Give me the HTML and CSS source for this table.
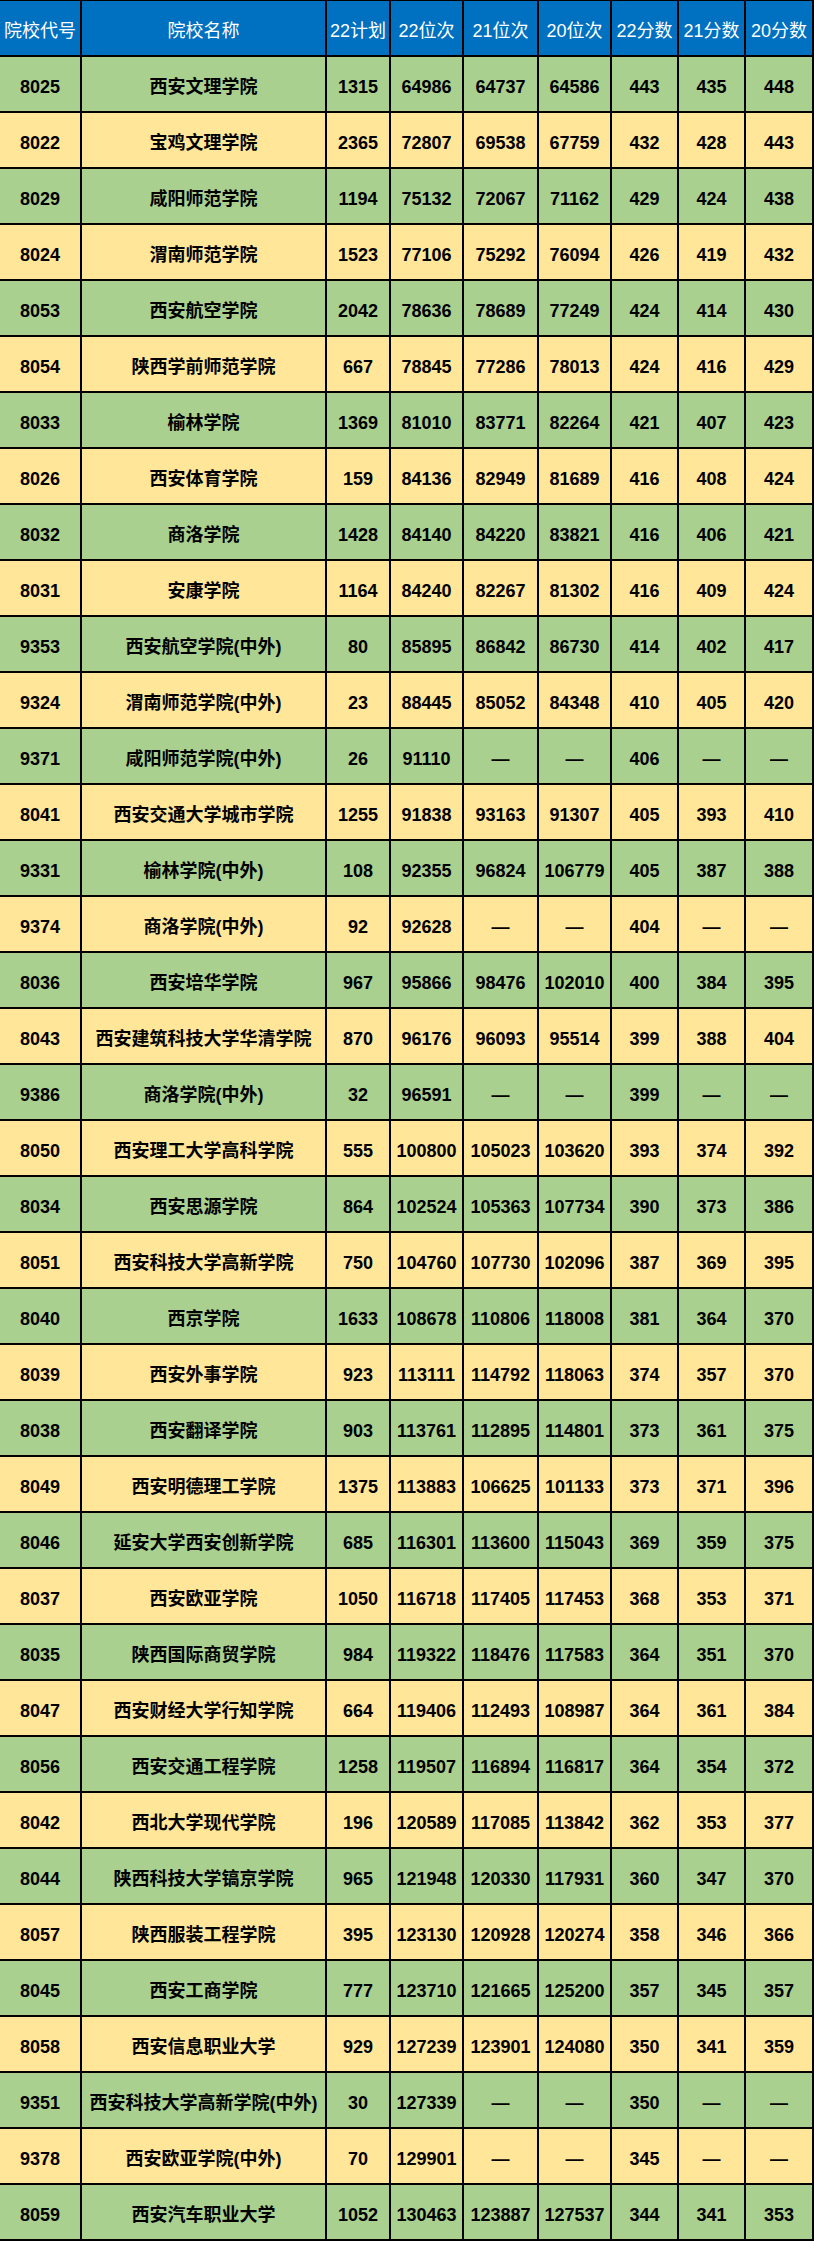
FILE: index.html
```html
<!DOCTYPE html>
<html lang="zh">
<head>
<meta charset="utf-8">
<title>院校分数</title>
<link rel="stylesheet" href="styles.css">
</head>
<body>
<table class="grid">
<colgroup>
<col class="c1"><col class="c2"><col class="c3"><col class="c4"><col class="c5"><col class="c6"><col class="c7"><col class="c8"><col class="c9">
</colgroup>
<thead>
<tr class="head"><th>院校代号</th><th>院校名称</th><th>22计划</th><th>22位次</th><th>21位次</th><th>20位次</th><th>22分数</th><th>21分数</th><th>20分数</th></tr>
</thead>
<tbody>
<tr class="g"><td>8025</td><td>西安文理学院</td><td>1315</td><td>64986</td><td>64737</td><td>64586</td><td>443</td><td>435</td><td>448</td></tr>
<tr class="y"><td>8022</td><td>宝鸡文理学院</td><td>2365</td><td>72807</td><td>69538</td><td>67759</td><td>432</td><td>428</td><td>443</td></tr>
<tr class="g"><td>8029</td><td>咸阳师范学院</td><td>1194</td><td>75132</td><td>72067</td><td>71162</td><td>429</td><td>424</td><td>438</td></tr>
<tr class="y"><td>8024</td><td>渭南师范学院</td><td>1523</td><td>77106</td><td>75292</td><td>76094</td><td>426</td><td>419</td><td>432</td></tr>
<tr class="g"><td>8053</td><td>西安航空学院</td><td>2042</td><td>78636</td><td>78689</td><td>77249</td><td>424</td><td>414</td><td>430</td></tr>
<tr class="y"><td>8054</td><td>陕西学前师范学院</td><td>667</td><td>78845</td><td>77286</td><td>78013</td><td>424</td><td>416</td><td>429</td></tr>
<tr class="g"><td>8033</td><td>榆林学院</td><td>1369</td><td>81010</td><td>83771</td><td>82264</td><td>421</td><td>407</td><td>423</td></tr>
<tr class="y"><td>8026</td><td>西安体育学院</td><td>159</td><td>84136</td><td>82949</td><td>81689</td><td>416</td><td>408</td><td>424</td></tr>
<tr class="g"><td>8032</td><td>商洛学院</td><td>1428</td><td>84140</td><td>84220</td><td>83821</td><td>416</td><td>406</td><td>421</td></tr>
<tr class="y"><td>8031</td><td>安康学院</td><td>1164</td><td>84240</td><td>82267</td><td>81302</td><td>416</td><td>409</td><td>424</td></tr>
<tr class="g"><td>9353</td><td>西安航空学院(中外)</td><td>80</td><td>85895</td><td>86842</td><td>86730</td><td>414</td><td>402</td><td>417</td></tr>
<tr class="y"><td>9324</td><td>渭南师范学院(中外)</td><td>23</td><td>88445</td><td>85052</td><td>84348</td><td>410</td><td>405</td><td>420</td></tr>
<tr class="g"><td>9371</td><td>咸阳师范学院(中外)</td><td>26</td><td>91110</td><td>—</td><td>—</td><td>406</td><td>—</td><td>—</td></tr>
<tr class="y"><td>8041</td><td>西安交通大学城市学院</td><td>1255</td><td>91838</td><td>93163</td><td>91307</td><td>405</td><td>393</td><td>410</td></tr>
<tr class="g"><td>9331</td><td>榆林学院(中外)</td><td>108</td><td>92355</td><td>96824</td><td>106779</td><td>405</td><td>387</td><td>388</td></tr>
<tr class="y"><td>9374</td><td>商洛学院(中外)</td><td>92</td><td>92628</td><td>—</td><td>—</td><td>404</td><td>—</td><td>—</td></tr>
<tr class="g"><td>8036</td><td>西安培华学院</td><td>967</td><td>95866</td><td>98476</td><td>102010</td><td>400</td><td>384</td><td>395</td></tr>
<tr class="y"><td>8043</td><td>西安建筑科技大学华清学院</td><td>870</td><td>96176</td><td>96093</td><td>95514</td><td>399</td><td>388</td><td>404</td></tr>
<tr class="g"><td>9386</td><td>商洛学院(中外)</td><td>32</td><td>96591</td><td>—</td><td>—</td><td>399</td><td>—</td><td>—</td></tr>
<tr class="y"><td>8050</td><td>西安理工大学高科学院</td><td>555</td><td>100800</td><td>105023</td><td>103620</td><td>393</td><td>374</td><td>392</td></tr>
<tr class="g"><td>8034</td><td>西安思源学院</td><td>864</td><td>102524</td><td>105363</td><td>107734</td><td>390</td><td>373</td><td>386</td></tr>
<tr class="y"><td>8051</td><td>西安科技大学高新学院</td><td>750</td><td>104760</td><td>107730</td><td>102096</td><td>387</td><td>369</td><td>395</td></tr>
<tr class="g"><td>8040</td><td>西京学院</td><td>1633</td><td>108678</td><td>110806</td><td>118008</td><td>381</td><td>364</td><td>370</td></tr>
<tr class="y"><td>8039</td><td>西安外事学院</td><td>923</td><td>113111</td><td>114792</td><td>118063</td><td>374</td><td>357</td><td>370</td></tr>
<tr class="g"><td>8038</td><td>西安翻译学院</td><td>903</td><td>113761</td><td>112895</td><td>114801</td><td>373</td><td>361</td><td>375</td></tr>
<tr class="y"><td>8049</td><td>西安明德理工学院</td><td>1375</td><td>113883</td><td>106625</td><td>101133</td><td>373</td><td>371</td><td>396</td></tr>
<tr class="g"><td>8046</td><td>延安大学西安创新学院</td><td>685</td><td>116301</td><td>113600</td><td>115043</td><td>369</td><td>359</td><td>375</td></tr>
<tr class="y"><td>8037</td><td>西安欧亚学院</td><td>1050</td><td>116718</td><td>117405</td><td>117453</td><td>368</td><td>353</td><td>371</td></tr>
<tr class="g"><td>8035</td><td>陕西国际商贸学院</td><td>984</td><td>119322</td><td>118476</td><td>117583</td><td>364</td><td>351</td><td>370</td></tr>
<tr class="y"><td>8047</td><td>西安财经大学行知学院</td><td>664</td><td>119406</td><td>112493</td><td>108987</td><td>364</td><td>361</td><td>384</td></tr>
<tr class="g"><td>8056</td><td>西安交通工程学院</td><td>1258</td><td>119507</td><td>116894</td><td>116817</td><td>364</td><td>354</td><td>372</td></tr>
<tr class="y"><td>8042</td><td>西北大学现代学院</td><td>196</td><td>120589</td><td>117085</td><td>113842</td><td>362</td><td>353</td><td>377</td></tr>
<tr class="g"><td>8044</td><td>陕西科技大学镐京学院</td><td>965</td><td>121948</td><td>120330</td><td>117931</td><td>360</td><td>347</td><td>370</td></tr>
<tr class="y"><td>8057</td><td>陕西服装工程学院</td><td>395</td><td>123130</td><td>120928</td><td>120274</td><td>358</td><td>346</td><td>366</td></tr>
<tr class="g"><td>8045</td><td>西安工商学院</td><td>777</td><td>123710</td><td>121665</td><td>125200</td><td>357</td><td>345</td><td>357</td></tr>
<tr class="y"><td>8058</td><td>西安信息职业大学</td><td>929</td><td>127239</td><td>123901</td><td>124080</td><td>350</td><td>341</td><td>359</td></tr>
<tr class="g"><td>9351</td><td>西安科技大学高新学院(中外)</td><td>30</td><td>127339</td><td>—</td><td>—</td><td>350</td><td>—</td><td>—</td></tr>
<tr class="y"><td>9378</td><td>西安欧亚学院(中外)</td><td>70</td><td>129901</td><td>—</td><td>—</td><td>345</td><td>—</td><td>—</td></tr>
<tr class="g"><td>8059</td><td>西安汽车职业大学</td><td>1052</td><td>130463</td><td>123887</td><td>127537</td><td>344</td><td>341</td><td>353</td></tr>
</tbody>
</table>
</body>
</html>
```

FILE: styles.css
```css
html, body {
  margin: 0;
  padding: 0;
  background: #ffffff;
}

.grid {
  width: 814px;
  table-layout: fixed;
  border-collapse: separate;
  border-spacing: 0;
  border-top: 1px solid #000;
  font-family: "Liberation Sans", "Noto Sans CJK SC", sans-serif;
  font-size: 18px;
  color: #000;
}

.c1 { width: 82px; }
.c2 { width: 245px; }
.c3 { width: 64px; }
.c4 { width: 73px; }
.c5 { width: 75px; }
.c6 { width: 73px; }
.c7 { width: 67px; }
.c8 { width: 67px; }
.c9 { width: 68px; }

.grid th,
.grid td {
  height: 54px;
  padding: 5px 0 0 0;
  box-sizing: border-box;
  height: 56px;
  border-right: 2px solid #000;
  border-bottom: 2px solid #000;
  text-align: center;
  vertical-align: middle;
  white-space: nowrap;
  overflow: hidden;
  line-height: 20px;
}

.head th {
  background: #0070c0;
  color: #ffffff;
  font-weight: normal;
}

.grid td {
  font-weight: bold;
}

.g td { background: #a9d08e; }
.y td { background: #ffe699; }
```
